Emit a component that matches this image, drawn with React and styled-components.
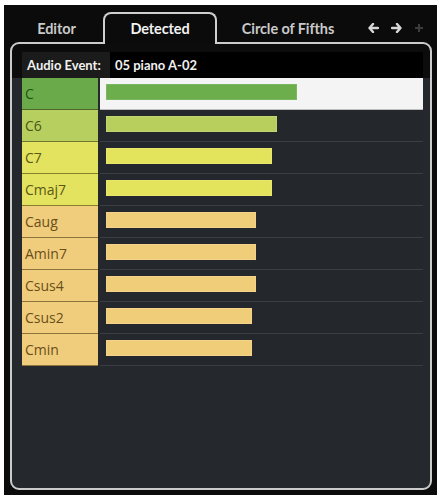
import React from "react";
import styled, { createGlobalStyle } from "styled-components";

const Global = createGlobalStyle`
  html, body { margin: 0; padding: 0; background: #ffffff; }
  body { font-family: "Open Sans", "Noto Sans", sans-serif; }
`;

const Frame = styled.div`
  margin: 5px 0 0 4px;
  width: 433px;
  height: 490px;
  background: #0b0b0b;
  box-sizing: border-box;
  padding: 7px 5px 5px 6px;
  display: flex;
  flex-direction: column;
`;

const TabRow = styled.div`
  display: flex;
  align-items: stretch;
  height: 30px;
  position: relative;
  z-index: 2;
`;

const Tab = styled.div`
  width: ${(p) => p.$w}px;
  box-sizing: border-box;
  display: flex;
  align-items: center;
  justify-content: center;
  font-family: "Lato", "Open Sans", sans-serif;
  font-weight: 700;
  font-size: 14.5px;
  letter-spacing: -0.1px;
  color: ${(p) => (p.$active ? "#f2f2f2" : "#c9c9c9")};
  border: 2px solid ${(p) => (p.$active ? "#cfcfcf" : "transparent")};
  border-bottom: none;
  border-radius: 8px 8px 0 0;
  background: #0b0b0b;
  margin-bottom: ${(p) => (p.$active ? "-2px" : "0")};
  padding-bottom: ${(p) => (p.$active ? "1px" : "0")};
`;

const Arrows = styled.div`
  display: flex;
  align-items: center;
  gap: 12px;
  padding-left: 9px;
  padding-top: 2px;
`;

const Panel = styled.div`
  flex: 1;
  border: 2px solid #cbcbcb;
  border-radius: 9px;
  background: linear-gradient(#0c0c0c 0, #0c0c0c 34px, #25282c 34px);
  padding: 8px 7px 0 10px;
  display: flex;
  flex-direction: column;
  position: relative;
  z-index: 1;
`;

const Header = styled.div`
  display: flex;
  height: 26px;
  font-family: "Lato", "Open Sans", sans-serif;
  font-weight: 700;
  font-size: 13px;
  color: #f0f0f0;
`;

const HeaderLabel = styled.div`
  width: 88px;
  display: flex;
  align-items: center;
  padding-left: 5px;
  box-sizing: border-box;
  background: #1b1b1b;
  white-space: nowrap;
`;

const HeaderValue = styled.div`
  flex: 1;
  display: flex;
  align-items: center;
  padding-left: 5px;
  background: #000;
`;

const Rows = styled.div`
  display: flex;
  flex-direction: column;
`;

const Row = styled.div`
  display: grid;
  grid-template-columns: 76px 1fr;
  column-gap: 2px;
  height: 32px;
`;

const Label = styled.div`
  background: ${(p) => p.$c.label};
  color: ${(p) => p.$c.text};
  font-family: "Open Sans", "Noto Sans", sans-serif;
  font-size: 14px;
  display: flex;
  align-items: center;
  padding-left: 3px;
  border-bottom: 1px solid rgba(60, 45, 10, 0.55);
  box-sizing: border-box;
`;

const BarCell = styled.div`
  box-sizing: border-box;
  padding: 6px 0 0 6px;
  background: ${(p) => (p.$sel ? "#f4f4f4" : "#24272b")};
  border-bottom: 1px solid ${(p) => (p.$sel ? "#bdbdbd" : "#3a3d42")};
`;

const Bar = styled.div`
  height: 16px;
  background: ${(p) => p.$c.bar};
  box-shadow: inset 0 0 0 1px rgba(255, 255, 255, 0.12);
`;

const COLORS = {
  green: { label: "#6aaa4b", bar: "#6dae4c", text: "#1f5512" },
  lime: { label: "#b7cf5e", bar: "#b8cf5d", text: "#4a5618" },
  yellow: { label: "#e4e35f", bar: "#e4e35c", text: "#5a5818" },
  orange: { label: "#f0cd7c", bar: "#f0cd79", text: "#6a4d1a" },
};

const chords = [
  { name: "C", c: "green", w: 191, sel: true },
  { name: "C6", c: "lime", w: 171 },
  { name: "C7", c: "yellow", w: 166 },
  { name: "Cmaj7", c: "yellow", w: 166 },
  { name: "Caug", c: "orange", w: 150 },
  { name: "Amin7", c: "orange", w: 150 },
  { name: "Csus4", c: "orange", w: 150 },
  { name: "Csus2", c: "orange", w: 146 },
  { name: "Cmin", c: "orange", w: 146 },
];

const ArrowIcon = ({ dir, color }) => (
  <svg width="11" height="10" viewBox="0 0 11 10">
    <g transform={dir === "right" ? "translate(11 0) scale(-1 1)" : undefined}>
      <path d="M5 1 L1.5 5 L5 9 M1.8 5 H10" fill="none" stroke={color} strokeWidth="2.4" strokeLinecap="round" strokeLinejoin="round" />
    </g>
  </svg>
);

const PlusIcon = () => (
  <svg width="10" height="10" viewBox="0 0 10 10">
    <path d="M5 1 V9 M1 5 H9" stroke="#3c3c3c" strokeWidth="2" />
  </svg>
);

export default function App() {
  return (
    <>
      <Global />
      <Frame>
        <TabRow>
          <Tab $w={93}>Editor</Tab>
          <Tab $w={114} $active>Detected</Tab>
          <Tab $w={142}>Circle of Fifths</Tab>
          <Arrows>
            <ArrowIcon dir="left" color="#d8d8d8" />
            <ArrowIcon dir="right" color="#d8d8d8" />
            <PlusIcon />
          </Arrows>
        </TabRow>
        <Panel>
          <Header>
            <HeaderLabel>Audio Event:</HeaderLabel>
            <HeaderValue>05 piano A-02</HeaderValue>
          </Header>
          <Rows>
            {chords.map((ch) => (
              <Row key={ch.name}>
                <Label $c={COLORS[ch.c]}>{ch.name}</Label>
                <BarCell $sel={ch.sel}>
                  <Bar $c={COLORS[ch.c]} style={{ width: ch.w }} />
                </BarCell>
              </Row>
            ))}
          </Rows>
        </Panel>
      </Frame>
    </>
  );
}
